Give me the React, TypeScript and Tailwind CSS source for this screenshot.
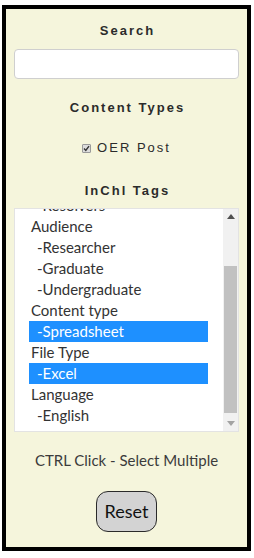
import React from "react";

const items: { label: string; sub?: boolean; selected?: boolean }[] = [
  { label: "-Resolvers", sub: true },
  { label: "Audience" },
  { label: "-Researcher", sub: true },
  { label: "-Graduate", sub: true },
  { label: "-Undergraduate", sub: true },
  { label: "Content type" },
  { label: "-Spreadsheet", sub: true, selected: true },
  { label: "File Type" },
  { label: "-Excel", sub: true, selected: true },
  { label: "Language" },
  { label: "-English", sub: true },
];

export default function App() {
  return (
    <div className="pt-[5px] pl-[2px]">
      <div className="w-[249px] h-[546px] border-4 border-black bg-[#f5f5dc] flex flex-col items-center">
        <div
          className="mt-[12px] h-[20px] leading-[20px] text-[13px] font-bold tracking-[2px] text-[#2b2b2b] pl-[2px]"
          style={{ fontFamily: '"Liberation Sans", Arial, sans-serif' }}
        >
          Search
        </div>
        <div className="mt-[8px] w-[225px] h-[30px] bg-white border border-[#cfcfcf] rounded-[4px]" />
        <div
          className="mt-[19px] h-[20px] leading-[20px] text-[13px] font-bold tracking-[2px] text-[#2b2b2b] pl-[2px]"
          style={{ fontFamily: '"Liberation Sans", Arial, sans-serif' }}
        >
          Content Types
        </div>
        <div
          className="mt-[20px] h-[20px] flex items-center gap-[6px] text-[13px] tracking-[2px] text-[#2b2b2b]"
          style={{ fontFamily: '"Liberation Sans", Arial, sans-serif' }}
        >
          <span className="w-[9px] h-[9px] border border-[#9a9a9a] bg-[#dcdcdc] rounded-[1px] flex items-center justify-center">
            <svg width="7" height="7" viewBox="0 0 7 7">
              <path d="M1 3.6 L2.8 5.4 L6 1.2" stroke="#333" strokeWidth="1.4" fill="none" />
            </svg>
          </span>
          <span>OER Post</span>
        </div>
        <div
          className="mt-[23px] h-[20px] leading-[20px] text-[13px] font-bold tracking-[2px] text-[#2b2b2b] pl-[2px]"
          style={{ fontFamily: '"Liberation Sans", Arial, sans-serif' }}
        >
          InChl Tags
        </div>
        <div className="mt-[7px] w-[225px] h-[224px] bg-white border border-[#e3e3e3] flex">
          <div className="flex-1 overflow-hidden pl-[14px] pr-[15px]">
            <div
              className="mt-[-14px] text-[15px] text-[#333]"
              style={{ fontFamily: 'Lato, "Open Sans", sans-serif' }}
            >
              {items.map((it) => (
                <div
                  key={it.label}
                  className={
                    "h-[21px] leading-[21px] whitespace-nowrap " +
                    (it.sub ? "pl-[8px] " : "pl-[2px] ") +
                    (it.selected ? "bg-[#1e90ff] text-white" : "")
                  }
                >
                  {it.label}
                </div>
              ))}
            </div>
          </div>
          <div className="w-[15px] bg-[#f1f1f1] flex flex-col items-center">
            <div className="h-[15px] flex items-center justify-center">
              <svg width="8" height="5" viewBox="0 0 8 5">
                <path d="M0 5 L4 0 L8 5 Z" fill="#505050" />
              </svg>
            </div>
            <div className="mt-[42px] w-[13px] h-[147px] bg-[#c1c1c1]" />
            <div className="mt-[3px] h-[15px] flex items-center justify-center">
              <svg width="8" height="5" viewBox="0 0 8 5">
                <path d="M0 0 L8 0 L4 5 Z" fill="#a3a3a3" />
              </svg>
            </div>
          </div>
        </div>
        <div
          className="mt-[18px] h-[20px] leading-[20px] text-[15px] text-[#3b3b3b]"
          style={{ fontFamily: 'Lato, "Open Sans", sans-serif' }}
        >
          CTRL Click - Select Multiple
        </div>
        <button
          className="mt-[21px] w-[61px] h-[41px] bg-[#d3d3d3] border border-[#2a2a2a] rounded-[12px] text-[18px] text-[#111]"
          style={{ fontFamily: 'Lato, "Open Sans", sans-serif' }}
        >
          Reset
        </button>
      </div>
    </div>
  );
}
